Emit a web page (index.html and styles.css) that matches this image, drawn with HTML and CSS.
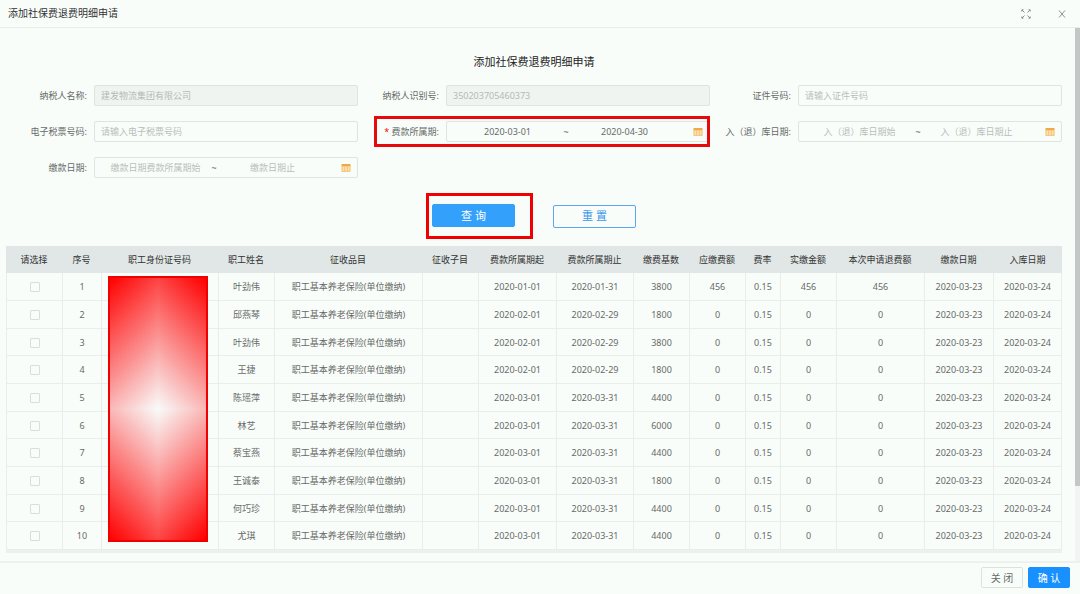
FILE: index.html
```html
<!DOCTYPE html>
<html lang="zh-CN">
<head>
<meta charset="utf-8">
<title>添加社保费退费明细申请</title>
<link rel="stylesheet" href="styles.css">
</head>
<body>
<svg class="sprite" aria-hidden="true">
  <symbol id="calendar" viewBox="0 0 10 10">
    <path fill="#efaa40" d="M1 1h8l.5.5v2.200h-9V1.500z"/>
    <path fill="#fbdfae" d="M.5 3.600h9V9h-9z"/>
    <path fill="none" stroke="#f5c680" d="M1 3.500v5h8v-5M3.500 4v4.500M6.500 4v4.500"/>
  </symbol>
</svg>
<div class="dialog">
  <header class="titlebar">
    <h1 class="titlebar-text">添加社保费退费明细申请</h1>
    <button class="icon-button" type="button" aria-label="全屏"><svg viewBox="0 0 10 10" class="icon"><path d="M1 1l2.500 2.500M9 1L6.500 3.500M1 9l2.500-2.500M9 9L6.500 6.500M.8 2.500V.8h1.700M7.500.8h1.700v1.700M.8 7.500v1.700h1.700M7.500 9.200h1.700V7.500"/></svg></button>
    <button class="icon-button" type="button" aria-label="关闭窗口"><svg viewBox="0 0 10 10" class="icon"><path d="M2 1.500l6 7M8 1.500l-6 7"/></svg></button>
  </header>
  <div class="viewport">
    <main class="content">
      <h2 class="heading">添加社保费退费明细申请</h2>
      <form class="form">
        <div class="fields">
          <div class="field"><label class="label" for="name">纳税人名称:</label><input class="box" id="name" value="建发物流集团有限公司" disabled></div>
          <div class="field"><label class="label" for="taxid">纳税人识别号:</label><input class="box" id="taxid" value="350203705460373" disabled></div>
          <div class="field"><label class="label" for="cert">证件号码:</label><input class="box" id="cert" placeholder="请输入证件号码"></div>
          <div class="field"><label class="label" for="ticket">电子税票号码:</label><input class="box" id="ticket" placeholder="请输入电子税票号码"></div>
          <div class="field marked"><label class="label" for="period"><span class="required">*</span> 费款所属期:</label><div class="box range"><input class="date" id="period" value="2020-03-01"><span class="tilde">~</span><input class="date" aria-label="费款所属期止" value="2020-04-30"><svg class="calendar"><use href="#calendar"/></svg></div></div>
          <div class="field"><label class="label" for="stock">入（退）库日期:</label><div class="box range"><input class="date" id="stock" placeholder="入（退）库日期始"><span class="tilde">~</span><input class="date" aria-label="入（退）库日期止" placeholder="入（退）库日期止"><svg class="calendar"><use href="#calendar"/></svg></div></div>
          <div class="field"><label class="label" for="pay">缴款日期:</label><div class="box range"><input class="date" id="pay" placeholder="缴款日期费款所属期始"><span class="tilde">~</span><input class="date" aria-label="缴款日期止" placeholder="缴款日期止"><svg class="calendar"><use href="#calendar"/></svg></div></div>
        </div>
        <div class="actions">
          <div class="query-mark"><button class="action action-primary" type="button">查 询</button></div>
          <button class="action action-outline" type="button">重 置</button>
        </div>
      </form>
      <div class="table-wrap">
        <table class="table">
          <colgroup id="cols"></colgroup>
          <thead><tr id="head"></tr></thead>
          <tbody id="rows"></tbody>
        </table>
        <div class="mask"></div>
      </div>
    </main>
    <div class="scroll-track"><div class="scroll-thumb"></div></div>
  </div>
  <footer class="footer">
    <button class="button" type="button">关 闭</button>
    <button class="button button-primary" type="button">确 认</button>
  </footer>
</div>
<script src="table.js"></script>
</body>
</html>
```
FILE: styles.css
```css
* { box-sizing: border-box; }
body {
  margin: 0;
  background: #f9fdfa;
  color: #666a68;
  font: 9px/14px "Noto Sans", "Noto Sans CJK SC", sans-serif;
}
button, input { font: inherit; color: inherit; }
h1, h2 { margin: 0; font-weight: 400; }
.sprite { position: absolute; width: 0; height: 0; }
.dialog { display: flex; flex-direction: column; height: 100vh; }
.titlebar {
  display: flex;
  align-items: center;
  gap: 16px;
  height: 28px;
  padding: 0 8px;
  border-bottom: 1px solid #e9eeeb;
}
.titlebar-text { flex: 1; padding-bottom: 2px; font-size: 10px; color: #333; }
.icon-button {
  display: flex;
  align-items: center;
  justify-content: center;
  width: 20px;
  height: 20px;
  padding: 0;
  border: 0;
  background: none;
}
.icon { width: 10px; height: 10px; fill: none; stroke: #8e9290; }
.viewport { flex: 1; display: flex; min-height: 0; }
.content { flex: 1; min-width: 0; padding: 0 13px 0 6px; overflow: hidden; }
.scroll-track { width: 5px; background: #f1f4f2; }
.scroll-thumb { height: 86%; background: #c3c7c5; }
.heading {
  margin-top: 25px;
  text-align: center;
  font-size: 11px;
  line-height: 18px;
  color: #222;
}
.fields {
  display: grid;
  grid-template-columns: repeat(3, minmax(0, 1fr));
  row-gap: 15px;
  margin-top: 14px;
}
.field { position: relative; display: flex; align-items: center; }
.label { flex: none; width: 25%; padding-right: 7px; text-align: right; white-space: nowrap; }
.required { color: #f00; }
.box {
  flex: 1;
  min-width: 0;
  height: 21px;
  padding: 0 6px;
  border: 1px solid #dfe4e1;
  border-radius: 2px;
  background: transparent;
}
.box:disabled { background: #f0f4f1; color: #b5b9b7; }
.range { display: flex; align-items: center; }
.date {
  flex: 1;
  min-width: 0;
  padding: 0;
  border: 0;
  background: none;
  text-align: center;
}
.tilde { width: 8px; text-align: center; }
.calendar { width: 10px; height: 10px; margin-left: 14px; }
::placeholder { color: #b9bdbb; opacity: 1; }
.marked::after {
  content: "";
  position: absolute;
  inset: -5px 0 -5px 16px;
  border: 3px solid #e60a0a;
  pointer-events: none;
}
.actions {
  display: flex;
  justify-content: center;
  align-items: center;
  gap: 20px;
  margin-top: 15px;
  padding-right: 6px;
}
.query-mark { padding: 8px 15px 9px 3px; border: 3px solid #f00000; }
.action {
  width: 83px;
  height: 23px;
  padding: 0;
  border: 1px solid #33a0fb;
  border-radius: 2px;
  font-size: 11px;
}
.action-primary { display: block; background: #33a0fb; color: #fff; }
.action-outline { background: #f9fdfa; color: #3b96ed; border-color: #5aa6f2; }
.table-wrap { position: relative; margin-top: 7px; border-bottom: 3px solid #edf1ee; }
.table { width: 100%; table-layout: fixed; border-collapse: separate; border-spacing: 0; }
.table th {
  height: 27px;
  padding: 0;
  background: #e1e7e6;
  color: #333;
  font-weight: 400;
  white-space: nowrap;
}
.table td {
  height: 28px;
  padding: 1px 0 0;
  border-left: 1px solid #e9eeeb;
  border-bottom: 1px solid #e9eeeb;
  text-align: center;
  white-space: nowrap;
}
.table td:last-child { border-right: 1px solid #e9eeeb; }
.table tr:nth-child(3n) td { height: 27px; }
.check {
  display: block;
  appearance: none;
  width: 10px;
  height: 10px;
  margin: 0 auto;
  border: 1px solid #d9dedb;
  border-radius: 1px;
}
.mask {
  position: absolute;
  left: 102px;
  top: 30px;
  width: 100px;
  height: 266px;
  border: 2px solid #f00000;
  background:
    linear-gradient(-45deg, #f8fbfa, #f00) 0 0 / 50% 50% no-repeat,
    linear-gradient(45deg, #f8fbfa, #f00) 100% 0 / 50% 50% no-repeat,
    linear-gradient(-135deg, #f8fbfa, #f00) 0 100% / 50% 50% no-repeat,
    linear-gradient(135deg, #f8fbfa, #f00) 100% 100% / 50% 50% no-repeat;
}
.footer {
  display: flex;
  justify-content: flex-end;
  align-items: center;
  gap: 5px;
  height: 33px;
  padding: 0 10px 2px;
  border-top: 2px solid #eef2ef;
}
.button {
  width: 42px;
  height: 21px;
  padding: 0;
  border: 1px solid #dde2df;
  border-radius: 2px;
  background: transparent;
  font-size: 10px;
}
.button-primary { background: #1890ff; border-color: #1890ff; color: #fff; }
```
FILE: table.js
```js
const columns = [
  ["请选择", 56], ["序号", 39], ["职工身份证号码", 117], ["职工姓名", 56], ["征收品目", 148],
  ["征收子目", 56], ["费款所属期起", 78], ["费款所属期止", 77], ["缴费基数", 56], ["应缴费额", 56],
  ["费率", 35], ["实缴金额", 56], ["本次申请退费额", 88], ["缴款日期", 69], ["入库日期", 69]
];
const people = [
  ["叶劲伟", "01-01", "01-31", 3800, 456], ["邱燕琴", "02-01", "02-29", 1800, 0],
  ["叶劲伟", "02-01", "02-29", 3800, 0], ["王捷", "02-01", "02-29", 1800, 0],
  ["陈瑶萍", "03-01", "03-31", 4400, 0], ["林艺", "03-01", "03-31", 6000, 0],
  ["蔡宝燕", "03-01", "03-31", 4400, 0], ["王诚泰", "03-01", "03-31", 1800, 0],
  ["何巧珍", "03-01", "03-31", 4400, 0], ["尤琪", "03-01", "03-31", 4400, 0]
];
const total = columns.reduce((sum, c) => sum + c[1], 0);
document.getElementById("cols").innerHTML =
  columns.map(c => `<col style="width:${c[1] / total * 100}%">`).join("");
document.getElementById("head").innerHTML =
  columns.map(c => `<th scope="col">${c[0]}</th>`).join("");
document.getElementById("rows").innerHTML = people.map(([name, from, to, base, fee], i) => {
  const cells = [
    `<input class="check" type="checkbox" aria-label="选择${i + 1}">`, i + 1, "", name,
    "职工基本养老保险(单位缴纳)", "", "2020-" + from, "2020-" + to, base, fee, "0.15", fee, fee,
    "2020-03-23", "2020-03-24"
  ];
  return "<tr>" + cells.map(c => `<td>${c}</td>`).join("") + "</tr>";
}).join("");
```
